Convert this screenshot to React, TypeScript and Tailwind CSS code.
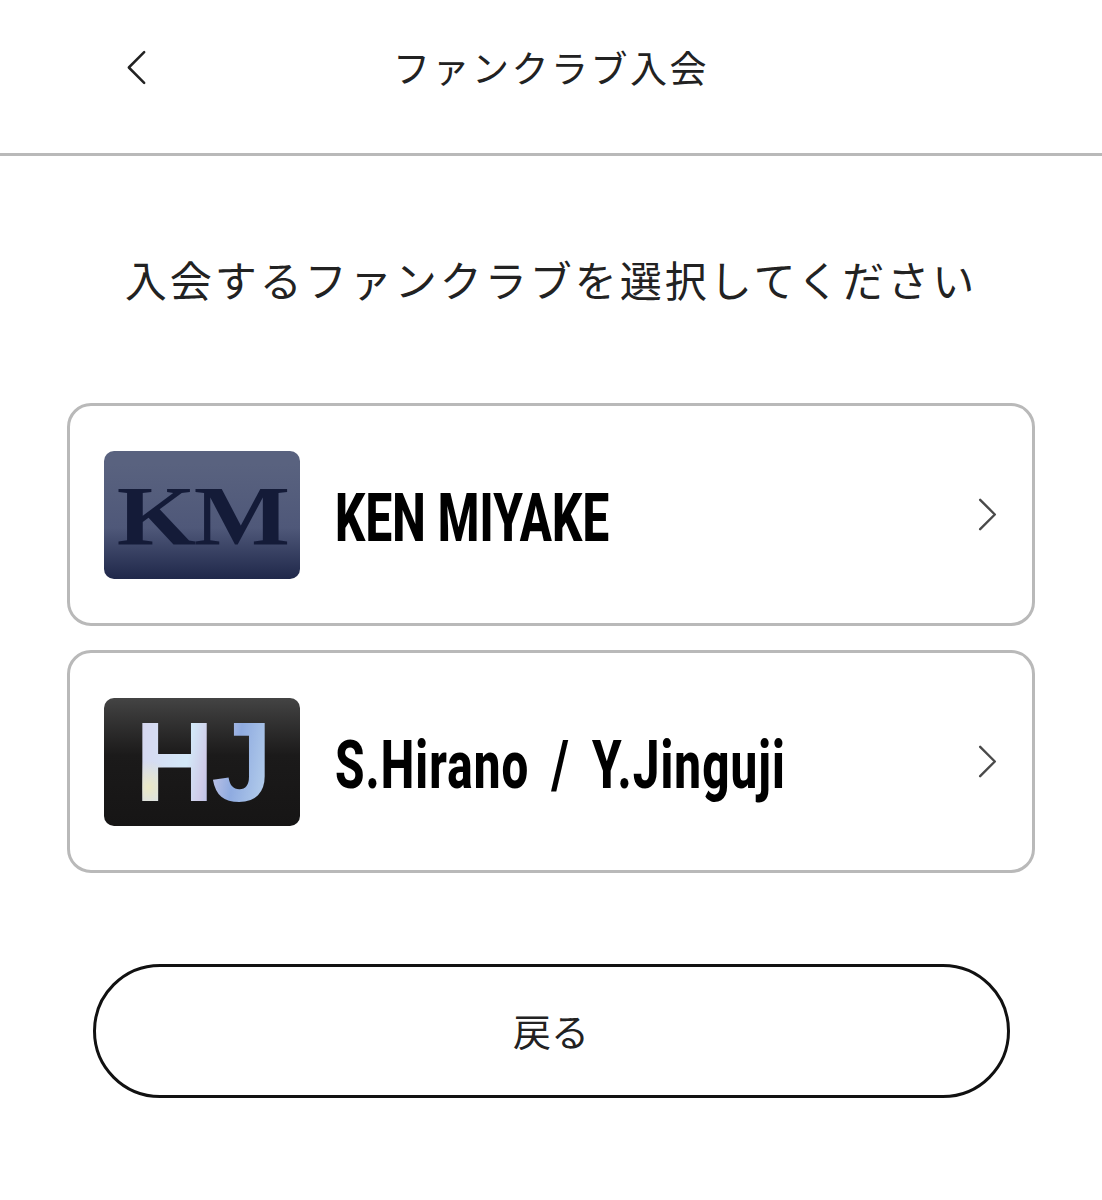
const jp = "font-['Noto_Sans_CJK_JP','Noto_Sans',sans-serif]";

function Chevron({ dir, className }: { dir: "left" | "right"; className: string }) {
  return (
    <svg viewBox="0 0 24 36" fill="none" className={className}>
      <path
        d={dir === "left" ? "M20 2 L4 18 L20 34" : "M4 2 L20 18 L4 34"}
        stroke="currentColor"
        strokeWidth="2.6"
        strokeLinecap="round"
        strokeLinejoin="round"
      />
    </svg>
  );
}

function ClubRow({
  thumb,
  name,
  nameClass,
}: {
  thumb: React.ReactNode;
  name: string;
  nameClass: string;
}) {
  return (
    <button className="flex h-[223px] w-full cursor-pointer items-center rounded-[24px] border-[3px] border-[#b9b9b9] bg-white pr-[33px] pl-[34px]">
      {thumb}
      <span className="ml-[35px] flex-1 text-left">
        {/* no condensed face installed, so squeeze Roboto */}
        <span
          className={`mt-[8px] inline-block origin-left scale-x-[0.72] font-['Roboto',sans-serif] text-[66px] leading-none font-extrabold whitespace-nowrap text-black ${nameClass}`}
        >
          {name}
        </span>
      </span>
      <Chevron dir="right" className="h-[33px] w-[23px] text-[#4a4a4a]" />
    </button>
  );
}

export default function App() {
  return (
    <div className={`h-[1200px] w-[1102px] overflow-hidden bg-white ${jp}`}>
      {/* header */}
      <header className="relative flex h-[156px] items-start justify-center border-b-[3px] border-[#b9b9b9]">
        <button className="absolute top-[50px] left-[125px] cursor-pointer text-[#222]">
          <Chevron dir="left" className="h-[35px] w-[23px]" />
        </button>
        <h1 className="mt-[39px] text-[37px] leading-[56px] font-normal tracking-[2.5px] text-[#222]">
          ファンクラブ入会
        </h1>
      </header>

      <main className="px-[67px]">
        <p className="mt-[91px] text-center text-[42px] leading-[64px] font-normal tracking-[3px] whitespace-nowrap text-[#222]">
          入会するファンクラブを選択してください
        </p>

        <div className="mt-[92px] flex flex-col gap-[24px]">
          <ClubRow
            name="KEN MIYAKE"
            nameClass="tracking-[0.2px]"
            thumb={
              <div className="flex h-[128px] w-[196px] shrink-0 items-center justify-center rounded-[10px] bg-gradient-to-b from-[#59627f] from-10% via-[#4f5879] via-60% to-[#20284a] pt-[3px]">
                <span className="scale-x-[1.2] font-['Liberation_Serif',serif] text-[85px] leading-none font-bold tracking-[-2px] text-[#141b38]">
                  KM
                </span>
              </div>
            }
          />
          <ClubRow
            name="S.Hirano / Y.Jinguji"
            nameClass="tracking-[1.5px] [word-spacing:13px]"
            thumb={
              <div className="flex h-[128px] w-[196px] shrink-0 items-center justify-center rounded-[10px] bg-gradient-to-b from-[#444444] via-[#1b1a1a] via-45% to-[#161515] pt-[1px]">
                <span className="scale-x-[0.97] bg-[radial-gradient(circle_at_10%_72%,#ebe8c4_0,transparent_18%),linear-gradient(100deg,#d6d3ee,#d3e8f8_40%,#cfcbe8_52%,#8fabe0_72%,#bcd5ee)] bg-clip-text font-['Liberation_Sans',sans-serif] text-[113px] leading-none font-bold tracking-[-3px] text-transparent">
                  HJ
                </span>
              </div>
            }
          />
        </div>

        <button className="mx-auto mt-[91px] block h-[134px] w-[917px] cursor-pointer rounded-full border-[3px] border-[#111] bg-white pb-[3px] text-[38px] font-normal text-[#222]">
          戻る
        </button>
      </main>
    </div>
  );
}
